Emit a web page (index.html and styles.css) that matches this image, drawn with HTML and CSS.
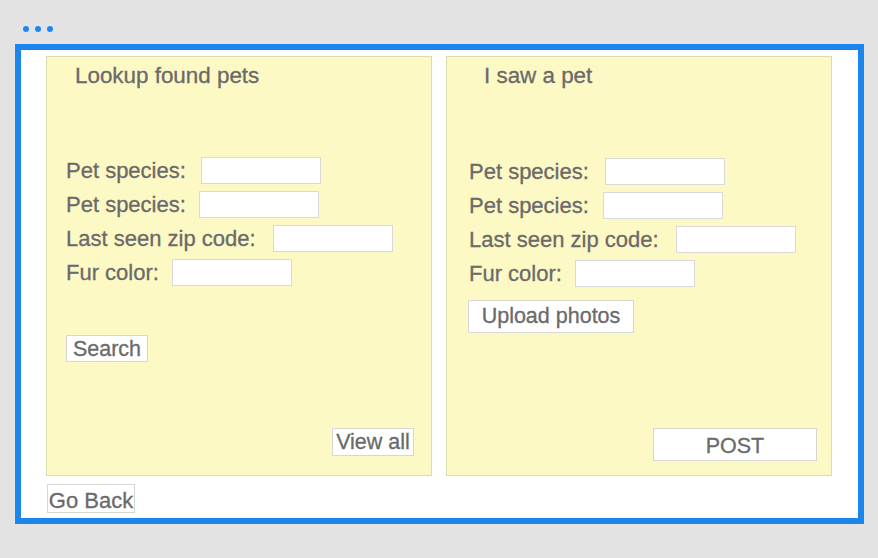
FILE: index.html
```html
<!DOCTYPE html>
<html>
<head>
<meta charset="utf-8">
<link rel="stylesheet" href="styles.css">
</head>
<body>
<div class="topbar">
  <span class="dot"></span><span class="dot"></span><span class="dot"></span>
</div>
<div class="frame">
  <div class="panels">
    <section class="panel panel-left">
      <div class="title">Lookup found pets</div>
      <div class="rows">
        <div class="row"><span>Pet species:</span><input class="field f1" type="text"></div>
        <div class="row"><span>Pet species:</span><input class="field f2" type="text"></div>
        <div class="row"><span>Last seen zip code:</span><input class="field f3" type="text"></div>
        <div class="row"><span>Fur color:</span><input class="field f4" type="text"></div>
      </div>
      <button class="btn search">Search</button>
      <div class="bottom"><button class="btn viewall">View all</button></div>
    </section>
    <section class="panel panel-right">
      <div class="title">I saw a pet</div>
      <div class="rows">
        <div class="row"><span>Pet species:</span><input class="field f1" type="text"></div>
        <div class="row"><span>Pet species:</span><input class="field f2" type="text"></div>
        <div class="row"><span>Last seen zip code:</span><input class="field f3" type="text"></div>
        <div class="row"><span>Fur color:</span><input class="field f4" type="text"></div>
      </div>
      <button class="btn upload">Upload photos</button>
      <div class="bottom"><button class="btn post">POST</button></div>
    </section>
  </div>
  <button class="btn goback">Go Back</button>
</div>
</body>
</html>
```

FILE: styles.css
```css
* { box-sizing: border-box; }
html, body {
  margin: 0;
  padding: 0;
  background: #e3e3e3;
  font-family: "Liberation Sans", Arial, sans-serif;
  color: #6a6a6a;
}
body { width: 878px; height: 558px; overflow: hidden; }

.topbar {
  height: 44px;
  padding: 26px 0 0 23px;
  display: flex;
  gap: 6px;
}
.dot {
  width: 6px;
  height: 6px;
  border-radius: 50%;
  background: #1e88f0;
}

.frame {
  margin-left: 15px;
  width: 849px;
  height: 480px;
  border: 6px solid #1b86ee;
  background: #fff;
  padding: 6px 0 0 25px;
}

.panels {
  display: flex;
  gap: 14px;
}

.panel {
  width: 386px;
  height: 420px;
  background: #fdf9c4;
  border: 1px solid #dedbb0;
  display: flex;
  flex-direction: column;
  -webkit-text-stroke: 0.3px #6a6a6a;
}
.panel-left { padding: 6px 17px 19px 19px; }
.panel-right { padding: 6px 14px 14px 22px; }

.title {
  font-size: 22.4px;
  line-height: 25px;
  height: 25px;
}
.panel-left .title { margin-left: 9px; }
.panel-right .title { margin-left: 15px; }

.rows {
  display: flex;
  flex-direction: column;
  gap: 7px;
}
.panel-left .rows { margin-top: 69px; }
.panel-right .rows { margin-top: 70px; }

.row {
  display: flex;
  align-items: center;
  height: 27px;
  font-size: 22px;
}

.field {
  width: 120px;
  height: 27px;
  border: 1px solid #d9d9d9;
  background: #fff;
  margin: 0;
  padding: 0;
  outline: none;
}
.panel-left .f1 { margin-left: 15px; }
.panel-left .f2 { margin-left: 13px; }
.panel-left .f3 { margin-left: 17px; }
.panel-left .f4 { margin-left: 13px; }
.panel-right .f1 { margin-left: 16px; }
.panel-right .f2 { margin-left: 14px; }
.panel-right .f3 { margin-left: 17px; }
.panel-right .f4 { margin-left: 13px; }

.btn {
  font-family: "Liberation Sans", Arial, sans-serif;
  font-size: 21.5px;
  color: #6a6a6a;
  -webkit-text-stroke: 0.3px #6a6a6a;
  background: #fff;
  border: 1px solid #d6d6d6;
  border-radius: 0;
  margin: 0;
  padding: 0;
  line-height: 25px;
}

.search {
  align-self: flex-start;
  margin-top: 49px;
  width: 82px;
  height: 27px;
  padding-top: 1px;
}
.upload {
  align-self: flex-start;
  margin-top: 13px;
  margin-left: -1px;
  width: 166px;
  height: 33px;
}

.bottom {
  margin-top: auto;
  display: flex;
  justify-content: flex-end;
}
.viewall {
  width: 82px;
  height: 28px;
  padding-top: 1px;
}
.post {
  width: 164px;
  height: 33px;
  padding-top: 4px;
}

.goback {
  display: block;
  margin-top: 8px;
  margin-left: 1px;
  width: 88px;
  height: 29px;
  font-size: 22px;
  padding-top: 3px;
}
```
